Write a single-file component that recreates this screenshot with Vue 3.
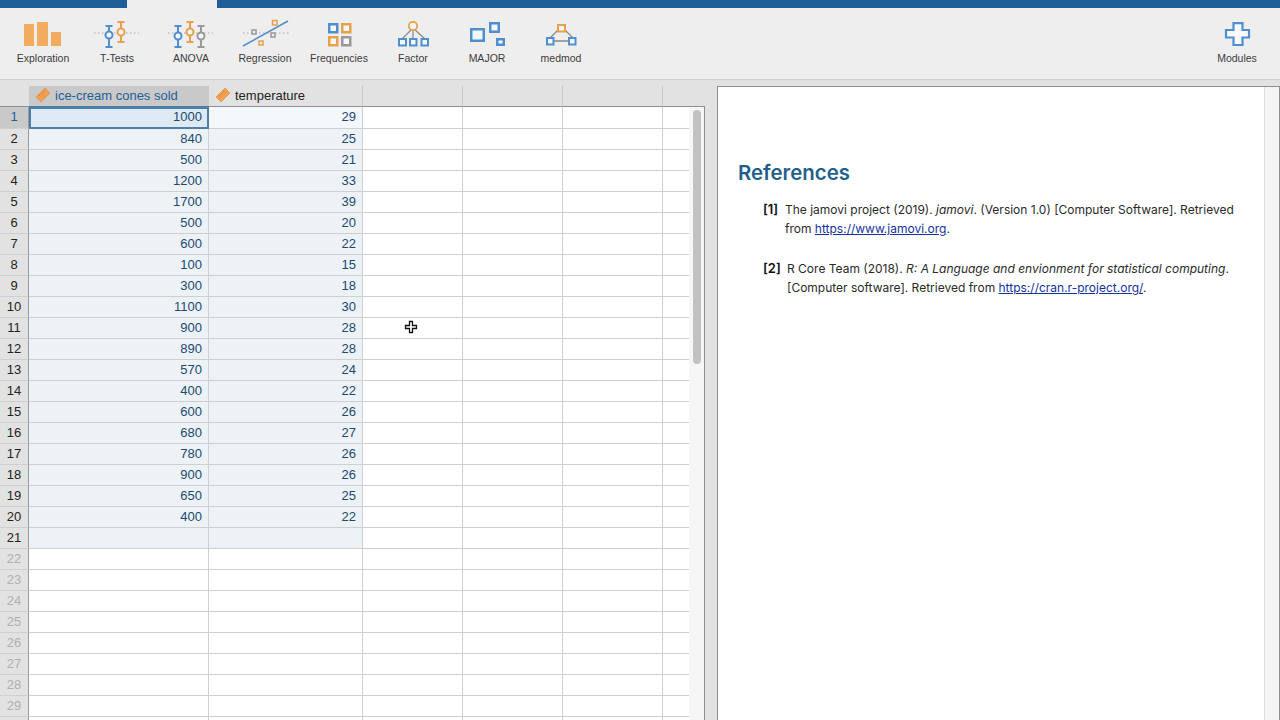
<script setup>
const tools = [
  { id: 'exploration', label: 'Exploration' },
  { id: 'ttests', label: 'T-Tests' },
  { id: 'anova', label: 'ANOVA' },
  { id: 'regression', label: 'Regression' },
  { id: 'frequencies', label: 'Frequencies' },
  { id: 'factor', label: 'Factor' },
  { id: 'major', label: 'MAJOR' },
  { id: 'medmod', label: 'medmod' },
]
const data = [
  [1000, 29], [840, 25], [500, 21], [1200, 33], [1700, 39], [500, 20], [600, 22], [100, 15], [300, 18], [1100, 30],
  [900, 28], [890, 28], [570, 24], [400, 22], [600, 26], [680, 27], [780, 26], [900, 26], [650, 25], [400, 22],
  ['', ''],
]
const rows = []
for (let i = 0; i < 30; i++) rows.push({ n: i + 1, a: data[i] ? data[i][0] : '', b: data[i] ? data[i][1] : '', filled: i < 21 })
</script>

<template>
  <div class="app">
    <div class="topbar"><div class="tab"></div></div>
    <div class="toolbar">
      <div v-for="t in tools" :key="t.id" class="tool">
        <svg class="ticon" width="60" height="40" viewBox="0 0 60 40" fill="none">
          <g v-if="t.id === 'exploration'" fill="#f2ac60">
            <rect x="11" y="16" width="10" height="22" />
            <rect x="24" y="14" width="11" height="24" />
            <rect x="38" y="24" width="10" height="14" />
          </g>
          <g v-else-if="t.id === 'ttests'">
            <path d="M7 25H52" stroke="#aaa" stroke-dasharray="1.500 2.500" />
            <path d="M22 18V39M18.500 18H25.500M18.500 39H25.500" stroke="#4f8fcf" stroke-width="2" />
            <circle cx="22" cy="27" r="3.500" fill="#f6f6f6" stroke="#4f8fcf" stroke-width="2" />
            <path d="M34 14V34M30.500 14H37.500M30.500 34H37.500" stroke="#e8a04c" stroke-width="2" />
            <circle cx="34" cy="24" r="3.500" fill="#f6f6f6" stroke="#e8a04c" stroke-width="2" />
          </g>
          <g v-else-if="t.id === 'anova'">
            <path d="M7 25H52" stroke="#aaa" stroke-dasharray="1.500 2.500" />
            <path d="M17 18V39M13.500 18H20.500M13.500 39H20.500" stroke="#4f8fcf" stroke-width="2" />
            <circle cx="17" cy="28" r="3.500" fill="#f6f6f6" stroke="#4f8fcf" stroke-width="2" />
            <path d="M29 14V34M25.500 14H32.500M25.500 34H32.500" stroke="#e8a04c" stroke-width="2" />
            <circle cx="29" cy="24" r="3.500" fill="#f6f6f6" stroke="#e8a04c" stroke-width="2" />
            <path d="M40 18V39M36.500 18H43.500M36.500 39H43.500" stroke="#999" stroke-width="2" />
            <circle cx="40" cy="28" r="3.500" fill="#f6f6f6" stroke="#999" stroke-width="2" />
          </g>
          <g v-else-if="t.id === 'regression'">
            <path d="M8 25H54" stroke="#aaa" stroke-dasharray="1.500 2.500" />
            <path d="M8 38L53 13" stroke="#4f8fcf" stroke-width="1.500" />
            <g fill="#eeeeee" stroke-width="1.500">
              <rect x="37.500" y="12.500" width="4.500" height="4.500" stroke="#e8a04c" />
              <rect x="17" y="22" width="4" height="4" stroke="#999" />
              <rect x="36" y="25" width="4" height="4" stroke="#999" />
              <rect x="24" y="33" width="4" height="4" stroke="#e8a04c" />
            </g>
          </g>
          <g v-else-if="t.id === 'frequencies'" stroke-width="2.500" fill="#f6f6f6">
            <rect x="20.250" y="16.250" width="8" height="8" stroke="#4f8fcf" />
            <rect x="33.250" y="16.250" width="8" height="8" stroke="#e8a04c" />
            <rect x="20.250" y="29.250" width="8" height="8" stroke="#e8a04c" />
            <rect x="33.250" y="29.250" width="8" height="8" stroke="#999" />
          </g>
          <g v-else-if="t.id === 'factor'">
            <path d="M30 20L19 31M30 20V31M30 20L42 31" stroke="#888" stroke-width="1.200" />
            <circle cx="30" cy="18" r="4.200" fill="#f6f6f6" stroke="#e8a04c" stroke-width="1.800" />
            <g fill="#f6f6f6" stroke="#4f8fcf" stroke-width="2">
              <rect x="16" y="31" width="7" height="6.500" />
              <rect x="27" y="31" width="6.500" height="6.500" />
              <rect x="38.500" y="31" width="6.500" height="6.500" />
            </g>
          </g>
          <g v-else-if="t.id === 'major'" fill="#f6f6f6" stroke="#4f8fcf" stroke-width="2.500">
            <rect x="14.250" y="21.250" width="12.500" height="11.500" />
            <rect x="33.250" y="15.250" width="8.500" height="8.500" />
            <rect x="40.250" y="31.250" width="6.500" height="5.500" />
          </g>
          <g v-else>
            <path d="M19 30L30 19M42 30L31 19M20 33H40" stroke="#888" stroke-width="1.300" />
            <rect x="27" y="17" width="7" height="6.500" fill="#f6f6f6" stroke="#e8a04c" stroke-width="2" />
            <rect x="16" y="30" width="6.500" height="6.500" fill="#f6f6f6" stroke="#4f8fcf" stroke-width="2" />
            <rect x="38" y="30" width="6.500" height="6.500" fill="#f6f6f6" stroke="#4f8fcf" stroke-width="2" />
          </g>
        </svg>
        <span>{{ t.label }}</span>
      </div>
      <div class="spacer"></div>
      <div class="tool">
        <svg class="ticon" width="60" height="40" viewBox="0 0 60 40" fill="none">
          <path d="M26.500 15.200H35.500V22H42V29.500H35.500V37H26.500V29.500H19V22H26.500Z" fill="#f8fbfe" stroke="#4f8fcf" stroke-width="2.200" />
        </svg>
        <span>Modules</span>
      </div>
    </div>
    <div class="main">
      <div class="sheet">
        <div class="table">
          <div class="hd corner"></div>
          <div class="hd sel">
            <svg class="ruler" width="16" height="16" viewBox="0 0 16 16"><path d="M1 10L10 1L15 6L6 15Z" fill="#f0a050" stroke="#e08a30" stroke-width=".6" /><path d="M4 8L5.500 9.500M6 6L7.500 7.500M8 4L9.500 5.500" stroke="#c97a25" stroke-width=".7" /></svg>
            <span>ice-cream cones sold</span>
          </div>
          <div class="hd blank">
            <svg class="ruler" width="16" height="16" viewBox="0 0 16 16"><path d="M1 10L10 1L15 6L6 15Z" fill="#f0a050" stroke="#e08a30" stroke-width=".6" /><path d="M4 8L5.500 9.500M6 6L7.500 7.500M8 4L9.500 5.500" stroke="#c97a25" stroke-width=".7" /></svg>
            <span>temperature</span>
          </div>
          <div class="hd blank"></div>
          <div class="hd blank"></div>
          <div class="hd blank"></div>
          <div class="hd last"></div>
          <template v-for="r in rows" :key="r.n">
            <div class="num" :class="{ dim: !r.filled, active: r.n === 1 }">{{ r.n }}</div>
            <div class="cell val" :class="{ fill: r.filled, current: r.n === 1 }">{{ r.a }}</div>
            <div class="cell val" :class="{ fill: r.filled, light: r.n === 1 }">{{ r.b }}</div>
            <div class="cell"></div>
            <div class="cell"></div>
            <div class="cell"></div>
            <div class="cell last"></div>
          </template>
        </div>
        <div class="vscroll"><div class="thumb"></div></div>
      </div>
      <div class="results">
        <div class="content">
          <h2>References</h2>
          <div class="ref">
            <b>[1]</b>
            <p>The jamovi project (2019). <i>jamovi</i>. (Version 1.0) [Computer Software]. Retrieved from <a>https://www.jamovi.org</a>.</p>
          </div>
          <div class="ref two">
            <b>[2]</b>
            <p>R Core Team (2018). <i>R: A Language and envionment for statistical computing</i>. [Computer software]. Retrieved from <a>https://cran.r-project.org/</a>.</p>
          </div>
        </div>
        <div class="rscroll"></div>
      </div>
    </div>
    <svg class="cursor" width="14" height="14" viewBox="0 0 14 14"><path d="M5.500 1.500H8.500V5.500H12.500V8.500H8.500V12.500H5.500V8.500H1.500V5.500H5.500Z" fill="#fff" stroke="#111" stroke-width="1.300" /></svg>
  </div>
</template>

<style>
html, body { margin: 0; overflow: hidden; background: #e2e2e2; }
</style>

<style scoped>
.app {
  width: 1280px;
  height: 720px;
  overflow: hidden;
  display: flex;
  flex-direction: column;
  position: relative;
  font-family: "Liberation Sans", Arial, sans-serif;
  color: #333;
}
.topbar { height: 8px; background: #1f5f98; padding-left: 127px; flex: none; }
.tab { width: 90px; height: 8px; background: #eeeeee; }
.toolbar {
  height: 72px;
  flex: none;
  box-sizing: border-box;
  background: #eeeeee;
  border-bottom: 1px solid #cfcfcf;
  display: flex;
  padding: 0 6px;
}
.spacer { flex: 1; }
.tool {
  width: 74px;
  display: flex;
  flex-direction: column;
  align-items: center;
  font-size: 10.500px;
  color: #3c3c3c;
}
.ticon { height: 40px; }
.tool span { line-height: 13px; margin-top: 4px; }
.main { flex: 1; display: flex; background: #e2e2e2; min-height: 0; }
.sheet { width: 705px; flex: none; display: flex; align-items: flex-start; }
.table {
  display: grid;
  grid-template-columns: 29px 180px 154px 100px 100px 100px 26px;
  grid-auto-rows: 21px;
  grid-template-rows: 27px 22px;
  flex: none;
  font-size: 13px;
}
.hd {
  margin-top: 6px;
  border-bottom: 1px solid #8f8f8f;
  box-sizing: border-box;
  display: flex;
  align-items: center;
  padding: 0 0 2px 6px;
  gap: 4px;
  color: #222;
}
.hd.blank { border-right: 1px solid #c8c8c8; }
.hd.sel { background: #c9c9c9; color: #1f5f98; border-bottom-color: #4e7fa8; }
.ruler { flex: none; }
.num {
  background: #e2e2e2;
  border-right: 1px solid #9a9a9a;
  border-bottom: 1px solid #cfcfcf;
  box-sizing: border-box;
  line-height: 20px;
  text-align: center;
  color: #222;
}
.num.dim { color: #b0b0b0; }
.num.active { background: #c9c9c9; color: #1f5f98; }
.cell {
  box-sizing: border-box;
  background: #fff;
  border-right: 1px solid #cfcfcf;
  border-bottom: 1px solid #cfcfcf;
}
.cell.last { border-right: 0; }
.val {
  text-align: right;
  padding-right: 6px;
  line-height: 20px;
  color: #1c4a70;
}
.fill { background: #edf2f7; }
.current {
  background: #dde9f3;
  outline: 2px solid #4e7fa8;
  outline-offset: -2px;
  border: 0;
  padding-right: 7px;
}
.light { background: #f4f7fb; }
.vscroll {
  width: 16px;
  margin-top: 26px;
  background: #f6f6f6;
  border-right: 1px solid #8f8f8f;
  box-sizing: border-box;
  border-top: 1px solid #8f8f8f;
  padding: 3px 3px 0 4px;
  height: 620px;
  flex: none;
}
.thumb { width: 8px; height: 254px; background: #c2c2c2; border-radius: 4px; }
.results {
  margin-left: 12px;
  flex: 1;
  margin-top: 6px;
  display: flex;
  background: #fff;
  border-left: 1px solid #8f8f8f;
  border-top: 1px solid #8f8f8f;
  border-right: 1px solid #8f8f8f;
  min-width: 0;
}
.content { flex: 1; padding: 71px 30px 0 20px; min-width: 0; }
h2 {
  margin: 0 0 12px;
  font-family: Inter, sans-serif;
  font-size: 20.400px;
  font-weight: 600;
  line-height: 30px;
  color: #1f5f8f;
}
.ref {
  display: flex;
  font-family: Inter, sans-serif;
  font-size: 12px;
  line-height: 19px;
  color: #2a2a2a;
  padding-left: 25px;
  margin-bottom: 21px;
}
.ref b { width: 22px; flex: none; font-weight: 600; color: #111; font-size: 13px; }
.ref.two b { width: 24px; }
.ref p { margin: 0; }
.ref a { color: #15329e; text-decoration: underline; }
.rscroll { width: 14px; flex: none; background: #f4f4f4; border-left: 1px solid #ddd; }
.cursor { position: absolute; left: 404px; top: 320px; }
</style>
